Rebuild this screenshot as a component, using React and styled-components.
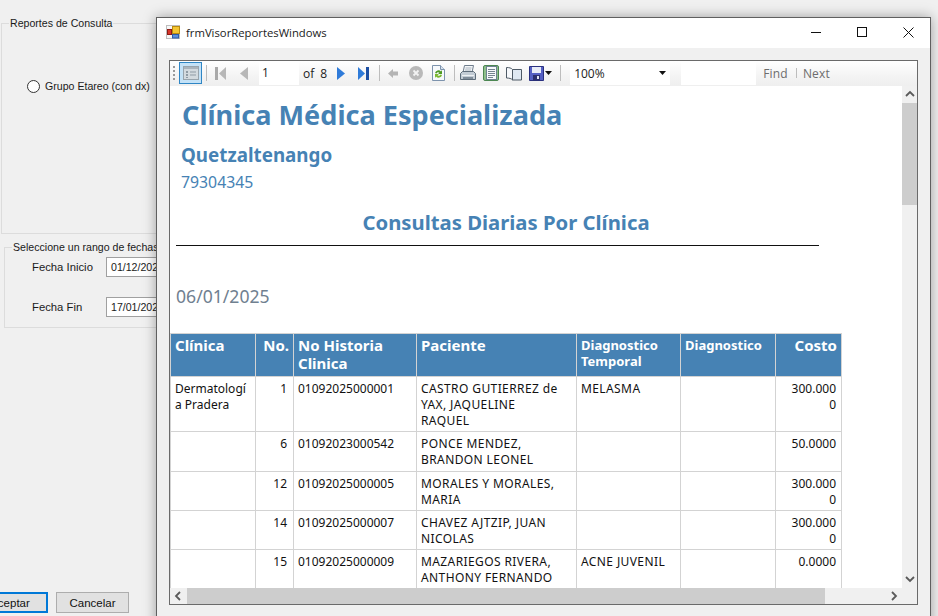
import styled, { createGlobalStyle } from "styled-components";

const GlobalStyle = createGlobalStyle`
  html, body {
    margin: 0;
    padding: 0;
    background: #f0f0f0;
  }
  * {
    box-sizing: border-box;
  }
`;

const REPORT_FONT = `"Noto Sans", Tahoma, sans-serif`;
const UI_FONT = `"Liberation Sans", Arial, sans-serif`;

const columns = [85, 38, 123, 160, 104, 95, 66];

const rows = [
  {
    h: 55,
    clinic: "Dermatología Pradera",
    no: 1,
    record: "01092025000001",
    patient: "CASTRO GUTIERREZ de YAX, JAQUELINE RAQUEL",
    temp: "MELASMA",
    cost: "300.0000",
  },
  { h: 40, no: 6, record: "01092023000542", patient: "PONCE MENDEZ, BRANDON LEONEL", cost: "50.0000" },
  { h: 39, no: 12, record: "01092025000005", patient: "MORALES Y MORALES, MARIA", cost: "300.0000" },
  { h: 39, no: 14, record: "01092025000007", patient: "CHAVEZ AJTZIP, JUAN NICOLAS", cost: "300.0000" },
  {
    h: 40,
    no: 15,
    record: "01092025000009",
    patient: "MAZARIEGOS RIVERA, ANTHONY FERNANDO",
    temp: "ACNE JUVENIL",
    cost: "0.0000",
  },
];

function AppIcon() {
  return (
    <svg width="14" height="14" viewBox="0 0 14 14">
      <rect x="0.5" y="0.5" width="13" height="13" fill="#f6f6f6" stroke="#bdbdbd" />
      <rect x="6.5" y="1.5" width="7" height="7" fill="#f4c531" stroke="#b98a10" />
      <rect x="1.5" y="4.5" width="4" height="5" fill="#d8362a" stroke="#8d1c16" />
      <rect x="6.5" y="9.5" width="6" height="3.500" fill="#5b8fdc" stroke="#2f5ba8" />
    </svg>
  );
}

function TreeIcon() {
  return (
    <svg width="16" height="14" viewBox="0 0 16 14">
      <rect x="0.5" y="0.5" width="15" height="13" fill="#d3dadf" stroke="#98a4ad" />
      <rect x="1" y="1" width="14" height="2" fill="#aab4bc" />
      <path d="M3 5h2v2H3zM3 8h2v2H3zM3 11h2v1H3z" fill="#8f9ba5" />
      <path d="M7 6h6M7 9h6" stroke="#8f9ba5" />
    </svg>
  );
}

function FirstIcon({ color, edge }) {
  return (
    <svg width="11" height="13" viewBox="0 0 11 13">
      <rect x="0" y="0" width="3" height="13" fill={edge} />
      <path d="M11 0v13L4 6.5z" fill={color} />
    </svg>
  );
}

function LastIcon({ color, edge }) {
  return (
    <svg width="11" height="13" viewBox="0 0 11 13">
      <path d="M0 0v13l7-6.500z" fill={color} />
      <rect x="8" y="0" width="3" height="13" fill={edge} />
    </svg>
  );
}

function TriangleIcon({ dir, color }) {
  return (
    <svg width="8" height="13" viewBox="0 0 8 13">
      <path d={dir === "left" ? "M8 0v13L0 6.500z" : "M0 0v13l8-6.500z"} fill={color} />
    </svg>
  );
}

function BackIcon() {
  return (
    <svg width="10" height="9" viewBox="0 0 10 9">
      <path d="M5 0v2.500h5v4H5V9L0 4.500z" fill="#b4b4b4" />
    </svg>
  );
}

function StopIcon() {
  return (
    <svg width="14" height="14" viewBox="0 0 14 14">
      <circle cx="7" cy="7" r="7" fill="#b9b9b9" />
      <path d="M4.500 4.500l5 5M9.500 4.500l-5 5" stroke="#f2f2f2" strokeWidth="1.800" />
    </svg>
  );
}

function RefreshIcon() {
  return (
    <svg width="13" height="16" viewBox="0 0 13 16">
      <path d="M0.500 0.500h8l4 4v11h-12z" fill="#f6f9fc" stroke="#7d93ad" />
      <path d="M8.500 0.500v4h4" fill="#d7e2ee" stroke="#7d93ad" />
      <path d="M3 8a3.500 3.500 0 0 1 6-1.500L10 5v4H6l1.500-1.200A2 2 0 0 0 4.500 8.500z" fill="#4e9a22" />
      <path d="M10 10a3.500 3.500 0 0 1-6 1.500L3 13V9h4l-1.500 1.200a2 2 0 0 0 3 -.7z" fill="#7ab82f" />
    </svg>
  );
}

function PrintIcon() {
  return (
    <svg width="16" height="16" viewBox="0 0 16 16">
      <path d="M4.500 0.500h9l-1.500 7h-9z" fill="#f4f6f8" stroke="#6f7d8c" />
      <path d="M5.500 3h6M5 5h6" stroke="#a9b4bf" />
      <path d="M0.500 8.500l2-2h11l2 2v6h-15z" fill="#c3ccd5" stroke="#5e6c7a" />
      <rect x="2" y="10" width="12" height="1" fill="#eef1f4" />
      <rect x="3" y="12" width="10" height="2" fill="#7f8c99" />
    </svg>
  );
}

function LayoutIcon() {
  return (
    <svg width="16" height="16" viewBox="0 0 16 16">
      <rect x="0.500" y="0.500" width="15" height="15" rx="1.500" fill="#8fbf8c" stroke="#4c8752" />
      <rect x="3.500" y="1.500" width="10" height="13" fill="#f8fafc" stroke="#6f8290" />
      <path d="M5 4.500h7M5 6.500h7M5 8.500h7M5 10.500h7M5 12.500h5" stroke="#75858f" />
    </svg>
  );
}

function PageIcon() {
  return (
    <svg width="16" height="15" viewBox="0 0 16 15">
      <path d="M6.500 3.500h9v10.500h-9z" fill="#dfe8f2" stroke="#4e5a66" />
      <path d="M0.500 1.500c2.500 0 5 .5 6 2v10.500c-1-1.500-3.500-2-6-2z" fill="#f6f8fb" stroke="#4e5a66" />
    </svg>
  );
}

function SaveIcon() {
  return (
    <svg width="15" height="15" viewBox="0 0 15 15">
      <path d="M0.500 0.500h14v14h-14z" fill="#5560c4" stroke="#2a3180" />
      <rect x="3" y="1" width="9" height="6" fill="#e8ecf8" />
      <rect x="4" y="9" width="7" height="5.500" fill="#2b2f6e" />
      <rect x="8" y="10" width="2" height="3" fill="#dfe3f4" />
    </svg>
  );
}

function Caret() {
  return (
    <svg width="7" height="4" viewBox="0 0 7 4">
      <path d="M0 0h7L3.500 4z" fill="#111" />
    </svg>
  );
}

function Chevron({ dir }) {
  const d = {
    up: "M1 6l4-4 4 4",
    down: "M1 2l4 4 4-4",
    left: "M6 1L2 5l4 4",
    right: "M3 1l4 4-4 4",
  }[dir];
  return (
    <svg width="10" height="10" viewBox="0 0 10 10">
      <path d={d} fill="none" stroke="#5a5a5a" strokeWidth="1.800" />
    </svg>
  );
}

export default function App() {
  return (
    <Desktop>
      <GlobalStyle />
      <MainForm>
        <ReportGroup>
          <GroupTitle>Reportes de Consulta</GroupTitle>
          <RadioRow>
            <RadioDot />
            <span>Grupo Etareo (con dx)</span>
          </RadioRow>
        </ReportGroup>
        <DateGroup>
          <GroupTitle>Seleccione un rango de fechas</GroupTitle>
          <DateRow>
            <DateLabel>Fecha Inicio</DateLabel>
            <DateBox>01/12/2024</DateBox>
          </DateRow>
          <DateRow>
            <DateLabel>Fecha Fin</DateLabel>
            <DateBox>17/01/2025</DateBox>
          </DateRow>
        </DateGroup>
        <ButtonRow>
          <FormButton $primary>Aceptar</FormButton>
          <FormButton>Cancelar</FormButton>
        </ButtonRow>
      </MainForm>

      <ViewerWindow>
        <TitleBar>
          <AppIcon />
          <WindowTitle>frmVisorReportesWindows</WindowTitle>
          <WindowControls>
            <WindowControl>
              <svg width="10" height="10" viewBox="0 0 10 10">
                <path d="M0 5.500h10" stroke="#111" />
              </svg>
            </WindowControl>
            <WindowControl>
              <svg width="10" height="10" viewBox="0 0 10 10">
                <rect x="0.500" y="0.500" width="9" height="9" fill="none" stroke="#111" />
              </svg>
            </WindowControl>
            <WindowControl>
              <svg width="11" height="11" viewBox="0 0 11 11">
                <path d="M0.500 0.500l10 10M10.500 0.500l-10 10" stroke="#111" />
              </svg>
            </WindowControl>
          </WindowControls>
        </TitleBar>

        <Viewer>
          <Toolbar>
            <Grip />
            <ToggleButton>
              <TreeIcon />
            </ToggleButton>
            <Separator $left={4} />
            <ToolSlot $left={8} $width={11}>
              <FirstIcon color="#b7b7b7" edge="#a9a9a9" />
            </ToolSlot>
            <ToolSlot $left={14} $width={8}>
              <TriangleIcon dir="left" color="#b7b7b7" />
            </ToolSlot>
            <PageInput $left={11}>1</PageInput>
            <ToolText $left={4}>of</ToolText>
            <ToolText $left={6}>8</ToolText>
            <ToolSlot $left={10} $width={8}>
              <TriangleIcon dir="right" color="#2f7bd9" />
            </ToolSlot>
            <ToolSlot $left={13} $width={11}>
              <LastIcon color="#2f7bd9" edge="#1c4fa3" />
            </ToolSlot>
            <Separator $left={10} />
            <ToolSlot $left={8} $width={10}>
              <BackIcon />
            </ToolSlot>
            <ToolSlot $left={11} $width={14}>
              <StopIcon />
            </ToolSlot>
            <ToolSlot $left={9} $width={13}>
              <RefreshIcon />
            </ToolSlot>
            <Separator $left={9} />
            <ToolSlot $left={5} $width={16}>
              <PrintIcon />
            </ToolSlot>
            <ToolSlot $left={7} $width={16}>
              <LayoutIcon />
            </ToolSlot>
            <ToolSlot $left={7} $width={16}>
              <PageIcon />
            </ToolSlot>
            <ToolSlot $left={7} $width={15}>
              <SaveIcon />
            </ToolSlot>
            <ToolSlot $left={1} $width={7}>
              <Caret />
            </ToolSlot>
            <Separator $left={8} />
            <ZoomSelect>
              <span>100%</span>
              <Caret />
            </ZoomSelect>
            <SearchInput />
            <FindLink $left={7}>Find</FindLink>
            <FindDivider />
            <FindLink $left={6}>Next</FindLink>
          </Toolbar>

          <ViewerBody>
            <ReportPane>
              <ClinicName>Clínica Médica Especializada</ClinicName>
              <CityName>Quetzaltenango</CityName>
              <PhoneLine>79304345</PhoneLine>
              <ReportTitle>Consultas Diarias Por Clínica</ReportTitle>
              <TitleRule />
              <DateHeading>06/01/2025</DateHeading>
              <ReportTable>
                <colgroup>
                  {columns.map((w, i) => (
                    <col key={i} style={{ width: w }} />
                  ))}
                </colgroup>
                <thead>
                  <tr>
                    <HeadCell>Clínica</HeadCell>
                    <HeadCell $right>No.</HeadCell>
                    <HeadCell>No Historia Clinica</HeadCell>
                    <HeadCell>Paciente</HeadCell>
                    <HeadCell $small>Diagnostico Temporal</HeadCell>
                    <HeadCell $small>Diagnostico</HeadCell>
                    <HeadCell $right>Costo</HeadCell>
                  </tr>
                </thead>
                <tbody>
                  {rows.map((r) => (
                    <BodyRow key={r.no} $h={r.h}>
                      <BodyCell>{r.clinic}</BodyCell>
                      <BodyCell $right>{r.no}</BodyCell>
                      <BodyCell>{r.record}</BodyCell>
                      <PatientCell>{r.patient}</PatientCell>
                      <TextCell>{r.temp}</TextCell>
                      <BodyCell />
                      <CostCell $right>{r.cost}</CostCell>
                    </BodyRow>
                  ))}
                </tbody>
              </ReportTable>
            </ReportPane>
            <VerticalBar>
              <ArrowBox $h={17}>
                <Chevron dir="up" />
              </ArrowBox>
              <VerticalThumb />
              <ArrowBox $h={17}>
                <Chevron dir="down" />
              </ArrowBox>
            </VerticalBar>
          </ViewerBody>

          <HorizontalBar>
            <ArrowBox $h={16} $w={17}>
              <Chevron dir="left" />
            </ArrowBox>
            <HorizontalThumb />
            <ArrowBox $h={16} $w={17}>
              <Chevron dir="right" />
            </ArrowBox>
            <ScrollCorner />
          </HorizontalBar>
        </Viewer>
      </ViewerWindow>
    </Desktop>
  );
}

const Desktop = styled.div`
  position: relative;
  width: 938px;
  height: 616px;
  overflow: hidden;
  background: #f0f0f0;
  font-family: ${UI_FONT};
`;

const MainForm = styled.div`
  display: flex;
  flex-direction: column;
  width: 300px;
  height: 616px;
  font-size: 10.6px;
  color: #1a1a1a;
`;

const ReportGroup = styled.fieldset`
  margin: 16px 0 0 1px;
  padding: 0;
  height: 218px;
  border: 1px solid #dcdcdc;
`;

const DateGroup = styled.fieldset`
  margin: 6px 0 0 4px;
  padding: 0;
  height: 88px;
  border: 1px solid #dcdcdc;
`;

const GroupTitle = styled.legend`
  margin-left: 7px;
  padding: 0 1px;
  font-size: 10.6px;
  line-height: 14px;
`;

const RadioRow = styled.label`
  display: flex;
  align-items: center;
  gap: 5px;
  margin: 49px 0 0 25px;
  line-height: 14px;
`;

const RadioDot = styled.span`
  width: 13px;
  height: 13px;
  border: 1px solid #333;
  border-radius: 50%;
  background: #fff;
`;

const DateRow = styled.div`
  display: flex;
  align-items: flex-start;
  margin: 0 0 20px 27px;

  &:first-of-type {
    margin-top: 3px;
  }
`;

const DateLabel = styled.span`
  width: 74px;
  margin-top: 3px;
  font-size: 11.3px;
  line-height: 14px;
`;

const DateBox = styled.div`
  width: 120px;
  height: 20px;
  padding: 0 4px;
  border: 1px solid #a0a0a0;
  background: #fff;
  line-height: 19px;
`;

const ButtonRow = styled.div`
  display: flex;
  gap: 8px;
  margin: auto 0 3px -28px;
`;

const FormButton = styled.button`
  width: ${(p) => (p.$primary ? 76 : 73)}px;
  height: 21px;
  padding: 0;
  border: ${(p) => (p.$primary ? "2px solid #0078d7" : "1px solid #adadad")};
  background: #e1e1e1;
  font-family: ${UI_FONT};
  font-size: 11.5px;
  color: #111;
`;

const ViewerWindow = styled.div`
  position: absolute;
  left: 156px;
  top: 17px;
  width: 775px;
  height: 620px;
  border: 1px solid #5f5f5f;
  background: #f0f0f0;
  box-shadow: 0 0 12px rgba(0, 0, 0, 0.35);
`;

const TitleBar = styled.div`
  display: flex;
  align-items: center;
  height: 30px;
  padding: 0 0 2px 9px;
  background: #fff;
`;

const WindowTitle = styled.span`
  margin-left: 6px;
  font-family: "Open Sans", "Noto Sans", sans-serif;
  font-size: 11.3px;
  color: #1a1a1a;
`;

const WindowControls = styled.div`
  display: flex;
  margin-left: auto;
  margin-right: -1px;
`;

const WindowControl = styled.div`
  display: flex;
  align-items: center;
  justify-content: center;
  width: 46px;
  height: 28px;
`;

const Viewer = styled.div`
  display: flex;
  flex-direction: column;
  width: 749px;
  height: 545px;
  margin: 12px 0 0 12px;
  border: 1px solid #6a6a6a;
  background: #fff;
`;

const Toolbar = styled.div`
  display: flex;
  align-items: center;
  flex: none;
  height: 25px;
  padding: 0 0 1px 3px;
  background: linear-gradient(#ffffff, #f4f4f4 60%, #efefef);
  font-family: "Open Sans", "Noto Sans", sans-serif;
  font-size: 12px;
  color: #222;
`;

const Grip = styled.div`
  width: 2px;
  height: 14px;
  background: repeating-linear-gradient(#9a9a9a 0 2px, transparent 2px 4px);
`;

const ToggleButton = styled.div`
  display: flex;
  align-items: center;
  justify-content: center;
  width: 23px;
  height: 22px;
  margin-left: 4px;
  border: 1px solid #2f86c5;
  background: #c4e2f7;
`;

const Separator = styled.div`
  flex: none;
  width: 1px;
  height: 16px;
  margin-left: ${(p) => p.$left}px;
  background: #bdbdbd;
`;

const ToolSlot = styled.div`
  display: flex;
  align-items: center;
  justify-content: center;
  flex: none;
  width: ${(p) => p.$width}px;
  margin-left: ${(p) => p.$left}px;
`;

const PageInput = styled.div`
  flex: none;
  width: 40px;
  height: 24px;
  margin-left: ${(p) => p.$left}px;
  padding-left: 3px;
  background: #fff;
  line-height: 24px;
`;

const ToolText = styled.span`
  margin-left: ${(p) => p.$left}px;
`;

const ZoomSelect = styled.div`
  display: flex;
  align-items: center;
  justify-content: space-between;
  flex: none;
  width: 100px;
  height: 24px;
  margin-left: 9px;
  padding: 0 4px;
  background: #fff;
`;

const SearchInput = styled.div`
  flex: none;
  width: 75px;
  height: 24px;
  margin-left: 11px;
  background: #fff;
`;

const FindLink = styled.span`
  margin-left: ${(p) => p.$left}px;
  color: #6d6d6d;
  letter-spacing: 0.2px;
`;

const FindDivider = styled.div`
  width: 1px;
  height: 10px;
  margin-left: 8px;
  background: #bdbdbd;
`;

const ViewerBody = styled.div`
  display: flex;
  flex: 1;
  min-height: 0;
`;

const ReportPane = styled.div`
  flex: none;
  width: 732px;
  overflow: hidden;
  background: #fff;
  font-family: ${REPORT_FONT};
  color: #4682b4;
`;

const ClinicName = styled.div`
  margin: 11px 0 0 12px;
  font-size: 27.1px;
  font-weight: 700;
  line-height: 36px;
`;

const CityName = styled.div`
  margin: 9px 0 0 11px;
  font-size: 18.8px;
  font-weight: 700;
  line-height: 26px;
`;

const PhoneLine = styled.div`
  margin: 2px 0 0 11px;
  font-size: 15.8px;
  line-height: 24px;
`;

const ReportTitle = styled.div`
  margin-top: 14px;
  width: 672px;
  text-align: center;
  font-size: 20.3px;
  font-weight: 700;
  line-height: 28px;
`;

const TitleRule = styled.div`
  width: 643px;
  height: 1px;
  margin: 9px 0 0 6px;
  background: #111;
`;

const DateHeading = styled.div`
  margin: 38px 0 0 6px;
  font-size: 17.6px;
  line-height: 24px;
  color: #708090;
`;

const ReportTable = styled.table`
  width: 671px;
  margin-top: 25px;
  border-collapse: collapse;
  table-layout: fixed;
`;

const HeadCell = styled.th`
  height: 43px;
  padding: ${(p) => (p.$small ? "3px 4px 0" : "2px 4px 0")};
  border: 1px solid #d3d3d3;
  background: #4682b4;
  color: #fff;
  font-family: ${REPORT_FONT};
  font-size: ${(p) => (p.$small ? 13 : 15)}px;
  font-weight: 700;
  line-height: ${(p) => (p.$small ? 16 : 18)}px;
  text-align: ${(p) => (p.$right ? "right" : "left")};
  vertical-align: top;
`;

const BodyRow = styled.tr`
  height: ${(p) => p.$h}px;
`;

const BodyCell = styled.td`
  padding: 4px ${(p) => (p.$right ? 6 : 4)}px 2px 4px;
  border: 1px solid #d3d3d3;
  color: #111;
  font-family: ${REPORT_FONT};
  font-size: 12px;
  line-height: 16px;
  text-align: ${(p) => (p.$right ? "right" : "left")};
  vertical-align: top;
  overflow-wrap: anywhere;
`;

const TextCell = styled(BodyCell)`
  letter-spacing: 0.4px;
`;

const PatientCell = styled(TextCell)`
  padding-right: 14px;
`;

const CostCell = styled(BodyCell)`
  padding-left: 12px;
  padding-right: 5px;
`;

const VerticalBar = styled.div`
  display: flex;
  flex-direction: column;
  flex: none;
  width: 15px;
  background: #f0f0f0;
`;

const ArrowBox = styled.div`
  display: flex;
  align-items: center;
  justify-content: center;
  flex: none;
  width: ${(p) => (p.$w ? `${p.$w}px` : "auto")};
  height: ${(p) => p.$h}px;
`;

const VerticalThumb = styled.div`
  height: 102px;
  margin-bottom: auto;
  background: #cdcdcd;
`;

const HorizontalBar = styled.div`
  display: flex;
  flex: none;
  height: 16px;
  background: #f0f0f0;
`;

const HorizontalThumb = styled.div`
  width: 638px;
  margin-right: 60px;
  background: #cdcdcd;
`;

const ScrollCorner = styled.div`
  flex: 1;
  background: #f0f0f0;
`;
